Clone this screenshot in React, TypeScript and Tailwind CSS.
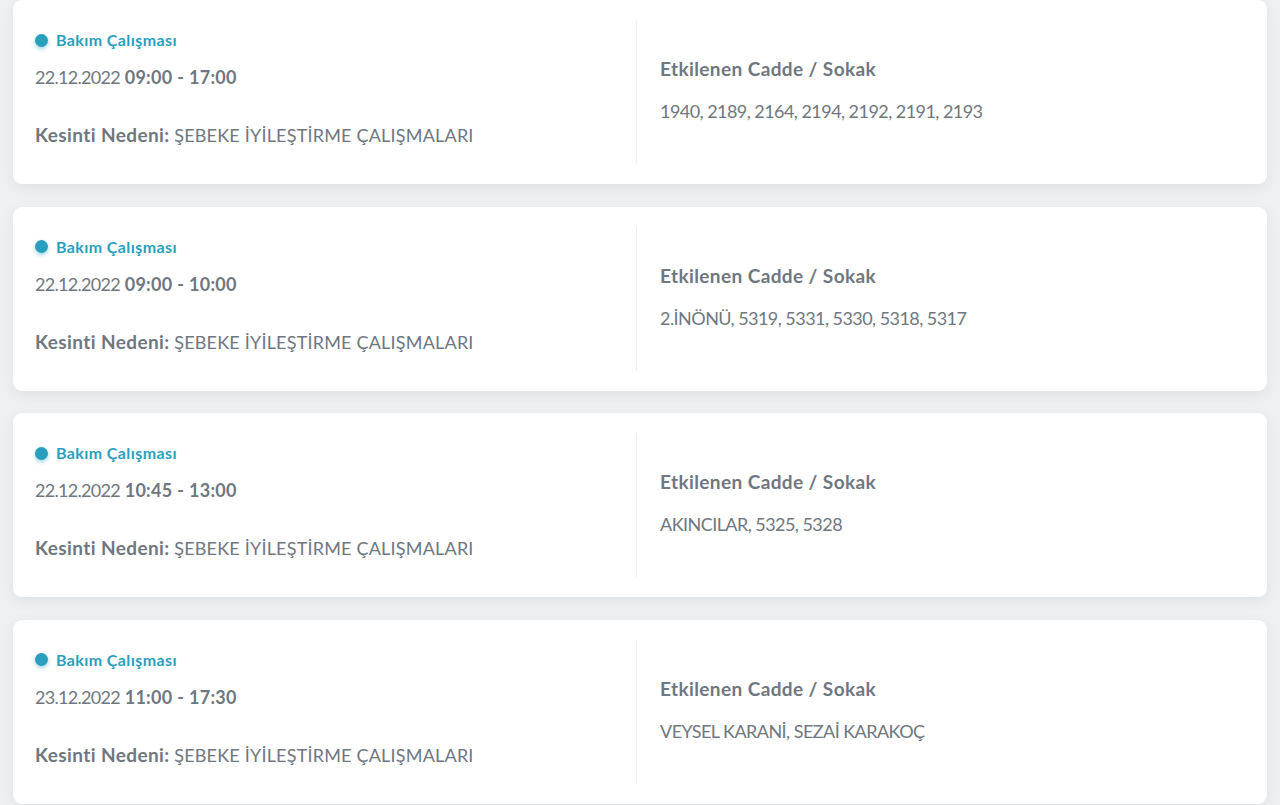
import React from "react";

type Outage = {
  date: string;
  time: string;
  streets: string;
};

const outages: Outage[] = [
  { date: "22.12.2022", time: "09:00 - 17:00", streets: "1940, 2189, 2164, 2194, 2192, 2191, 2193" },
  { date: "22.12.2022", time: "09:00 - 10:00", streets: "2.İNÖNÜ, 5319, 5331, 5330, 5318, 5317" },
  { date: "22.12.2022", time: "10:45 - 13:00", streets: "AKINCILAR, 5325, 5328" },
  { date: "23.12.2022", time: "11:00 - 17:30", streets: "VEYSEL KARANİ, SEZAİ KARAKOÇ" },
];

const OutageCard: React.FC<{ item: Outage }> = ({ item }) => {
  return (
    <div className="h-[184px] shrink-0 mx-[13px] bg-white rounded-[9px] shadow-[0_4px_14px_rgba(40,50,60,0.07)] flex px-[22px] py-[20px]">
      {/* Left side - type, date, reason */}
      <div className="w-[602px] shrink-0 border-r border-[#eceef0] flex flex-col">
        <div className="flex items-center gap-[8px] mt-[10px] h-[20px]">
          <span className="w-[13px] h-[13px] rounded-full bg-[#2a9fbd] shadow-[0_2px_4px_rgba(42,159,189,0.45)]"></span>
          <span className="text-[16px] tracking-[0.4px] font-bold text-[#2a9fbd]">Bakım Çalışması</span>
        </div>
        <div className="mt-[14px] text-[18px] leading-[27px] text-[#6f7780]">
          <span className="tracking-[-0.7px]">{item.date}</span>{" "}
          <span className="font-bold tracking-[0.3px]">{item.time}</span>
        </div>
        <div className="mt-[30px] text-[18px] leading-[27px] text-[#6f7780]">
          <span className="font-bold text-[19px] tracking-[0.4px]">Kesinti Nedeni:</span>{" "}
          <span className="tracking-[0.2px]">ŞEBEKE İYİLEŞTİRME ÇALIŞMALARI</span>
        </div>
      </div>

      {/* Right side - affected streets */}
      <div className="flex-1 pl-[23px] flex flex-col justify-center pb-[4px]">
        <div className="text-[19px] tracking-[0.4px] leading-[27px] font-bold text-[#6f7780]">Etkilenen Cadde / Sokak</div>
        <div className="mt-[16px] text-[18px] tracking-[-0.55px] leading-[27px] text-[#6f7780]">{item.streets}</div>
      </div>
    </div>
  );
};

export default function App() {
  return (
    <div
      className="w-[1280px] h-[805px] overflow-hidden bg-[#eef0f2] flex flex-col gap-[22.5px] pt-0"
      style={{ fontFamily: "Lato, 'Noto Sans', sans-serif" }}
    >
      {outages.map((o, i) => (
        <OutageCard key={i} item={o} />
      ))}
    </div>
  );
}
